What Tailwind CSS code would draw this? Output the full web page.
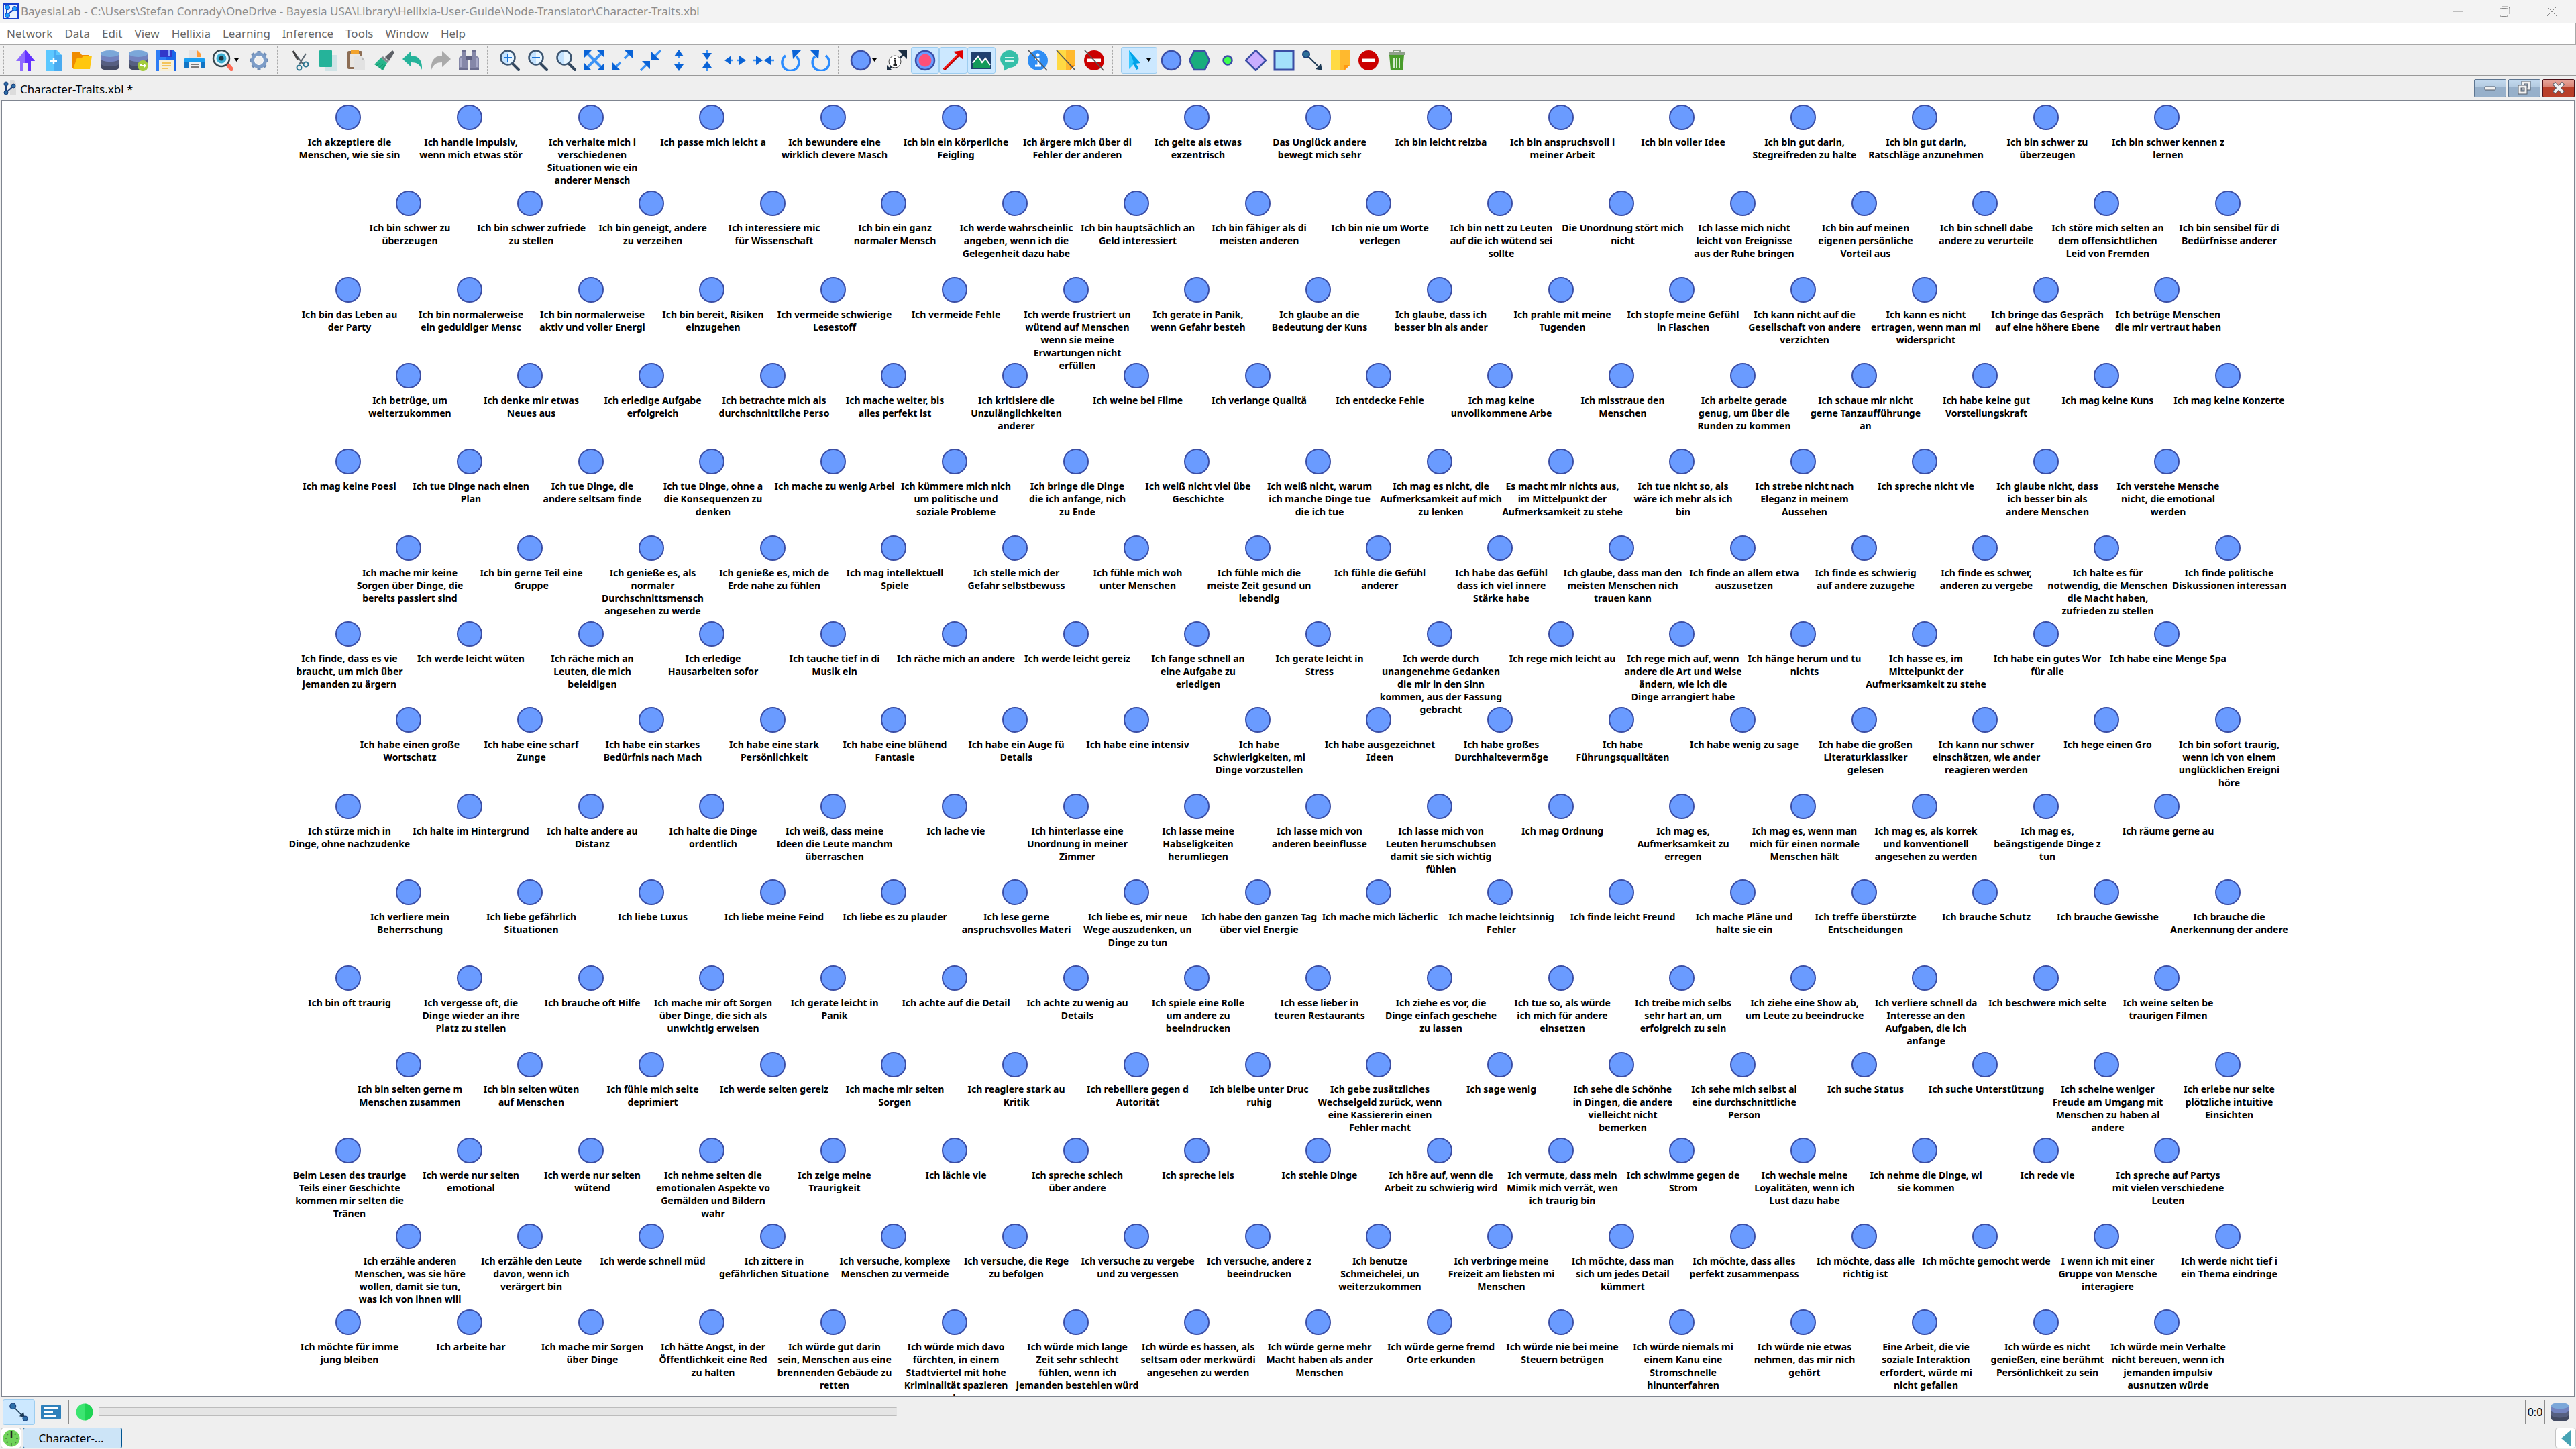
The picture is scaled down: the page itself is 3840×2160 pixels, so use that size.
<!DOCTYPE html>
<html lang="de">
<head>
<meta charset="utf-8">
<title>BayesiaLab</title>
<script src="https://cdn.jsdelivr.net/npm/@tailwindcss/browser@4"></script>
</head>
<body class="flex h-screen flex-col overflow-hidden bg-[#efefef] font-['Noto_Sans','Open_Sans',sans-serif] text-[17px] text-black">

<svg class="hidden" aria-hidden="true">
  <defs>
    <symbol id="db" viewBox="0 0 32 32"><path d="M2 6v20c0 3 6 5 14 5s14-2 14-5V6z" fill="#434a62"/><path d="M2 6v14c0 3 6 5 14 5s14-2 14-5V6z" fill="#565f80"/><path d="M2 6v7c0 3 6 5 14 5s14-2 14-5V6z" fill="#7383bf"/><ellipse cx="16" cy="6" rx="14" ry="5" fill="#7ba7d9"/></symbol>
    <symbol id="glass" viewBox="0 0 32 32"><path d="M19 20l10 10" stroke="#33475e" stroke-width="4" stroke-linecap="round"/><circle cx="13" cy="12" r="10.500" fill="#c4e3ff" stroke="#3d5570" stroke-width="2.500"/><path d="M13 3a9 9 0 0 1 0 18z" fill="#e9f6ff"/></symbol>
    <symbol id="note" viewBox="0 0 32 32"><path d="M2 1h28v22l-8 8H2z" fill="#ffda44"/><path d="M16 1h14v22l-8 8h-6z" fill="#ffb92e"/><path d="M22 31v-8h8z" fill="#ff9811"/></symbol>
    <symbol id="stop" viewBox="0 0 32 32"><circle cx="16" cy="16" r="15" fill="#cb0000"/><rect x="6" y="13.500" width="20" height="5" fill="#fff"/></symbol>
    <symbol id="slash" viewBox="0 0 32 32"><path d="M2 1l28 30" stroke="#555" stroke-width="1.800"/></symbol>
    <symbol id="arc" viewBox="0 0 32 32"><path d="M8 8l16 16" stroke="#1d3a55" stroke-width="2"/><path d="M26 25l-9-2 7-7z" fill="#1d3a55"/><circle cx="6" cy="6" r="5" fill="#2d6ea8" stroke="#1b3f7a" stroke-width="1.500"/></symbol>
    <symbol id="updown" viewBox="0 0 32 32"><path d="M16 5v8M16 19v8" stroke="#3d93f5" stroke-width="2.500"/><path d="M9 10l7-10 7 10z" fill="#0a63d6"/><path d="M9 22l7 10 7-10z" fill="#0a63d6"/></symbol>
    <symbol id="inward" viewBox="0 0 32 32"><path d="M16 0v6M16 26v6" stroke="#3d93f5" stroke-width="2.500"/><path d="M9 5l7 10 7-10z" fill="#0a63d6"/><path d="M9 27l7-10 7 10z" fill="#0a63d6"/></symbol>
    <symbol id="rotate" viewBox="0 0 32 32"><path d="M7 9a12.500 12.500 0 1 0 16 1" fill="none" stroke="#2a8cff" stroke-width="3.500"/><path d="M17 1h13L18 14z" fill="#0a63d6"/></symbol>
  </defs>
</svg>

<header class="flex h-[34px] shrink-0 items-center bg-[#f3f3f3] pl-1 text-[#8d8d8d]">
  <svg class="h-6 w-6 shrink-0" viewBox="0 0 24 24"><rect x="1" y="1" width="22" height="22" fill="#e8f1ff" stroke="#1740d0" stroke-width="2"/><path d="M6 7v11l12-10" fill="none" stroke="#123cc0" stroke-width="2"/><circle cx="7" cy="6" r="3.500" fill="#1d9cff" stroke="#0a35b8"/><circle cx="18" cy="8" r="3.500" fill="#1d9cff" stroke="#0a35b8"/><circle cx="7" cy="18" r="3.500" fill="#1d9cff" stroke="#0a35b8"/></svg>
  <h1 class="ml-[3px] leading-6">BayesiaLab - C:\Users\Stefan Conrady\OneDrive - Bayesia USA\Library\Hellixia-User-Guide\Node-Translator\Character-Traits.xbl</h1>
  <div class="ml-auto flex pr-px">
    <button aria-label="Minimize" class="flex h-[34px] w-[70px] items-center justify-center"><svg class="h-4 w-4" viewBox="0 0 16 16"><path d="M0 8h16" stroke="#888"/></svg></button>
    <button aria-label="Restore" class="flex h-[34px] w-[70px] items-center justify-center"><svg class="h-4 w-4" viewBox="0 0 16 16" fill="none" stroke="#888"><rect x=".5" y="3.500" width="12" height="12" rx="2"/><path d="M4 1h8a3 3 0 0 1 3 3v8"/></svg></button>
    <button aria-label="Close" class="flex h-[34px] w-[70px] items-center justify-center"><svg class="h-4 w-4" viewBox="0 0 16 16"><path d="M1 1l14 14M15 1L1 15" stroke="#888"/></svg></button>
  </div>
</header>

<nav class="flex h-[33px] shrink-0 items-center border-r border-b-2 border-[#a8a8a8] bg-white pl-px text-[#666]">
  <button class="px-[9px] leading-6">Network</button>
  <button class="px-[9px] leading-6">Data</button>
  <button class="px-[9px] leading-6">Edit</button>
  <button class="px-[9px] leading-6">View</button>
  <button class="px-[9px] leading-6">Hellixia</button>
  <button class="px-[9px] leading-6">Learning</button>
  <button class="px-[9px] leading-6">Inference</button>
  <button class="px-[9px] leading-6">Tools</button>
  <button class="px-[9px] leading-6">Window</button>
  <button class="px-[9px] leading-6">Help</button>
</nav>

<div id="toolbar" role="toolbar" aria-label="Tools" class="flex h-[46px] shrink-0 items-center border-b border-[#999]"></div>

<div class="flex h-[36px] shrink-0 items-center pl-1">
  <svg class="h-6 w-6 shrink-0" viewBox="0 0 24 24"><path d="M11 1h6l3 4v18h-9z" fill="#dcdcdc"/><path d="M5 7v12l11-10" fill="none" stroke="#1b3f7a" stroke-width="2"/><circle cx="5" cy="6" r="3" fill="#2d6ea8" stroke="#1b3f7a"/><circle cx="16" cy="9" r="3" fill="#2d6ea8" stroke="#1b3f7a"/><circle cx="5" cy="19" r="3" fill="#2d6ea8" stroke="#1b3f7a"/></svg>
  <h2 class="ml-[2px] mt-1 leading-6">Character-Traits.xbl *</h2>
  <div class="ml-auto flex gap-[3px] pr-[2px]">
    <button aria-label="Minimize document" class="flex h-[27px] w-12 items-center justify-center rounded-[2px] border border-[#5d7590] bg-linear-to-b from-[#c3d9ee] from-0% via-[#b4cbe1] via-40% to-[#97b0ca] to-45%"><svg class="h-5 w-5" viewBox="0 0 20 20"><rect x="2" y="8" width="16" height="5" rx="1" fill="#f2f2f2" stroke="#555c68"/></svg></button>
    <button aria-label="Restore document" class="flex h-[27px] w-12 items-center justify-center rounded-[2px] border border-[#5d7590] bg-linear-to-b from-[#c3d9ee] from-0% via-[#b4cbe1] via-40% to-[#97b0ca] to-45%"><svg class="h-5 w-5" viewBox="0 0 20 20" fill="none"><rect x="8" y="2" width="9" height="9" stroke="#555c68" stroke-width="5"/><rect x="8" y="2" width="9" height="9" stroke="#f2f2f2" stroke-width="3"/><rect x="3" y="8" width="9" height="9" stroke="#555c68" stroke-width="5"/><rect x="3" y="8" width="9" height="9" stroke="#f2f2f2" stroke-width="3"/></svg></button>
    <button aria-label="Close document" class="flex h-[27px] w-12 items-center justify-center rounded-[2px] border border-[#4d1018] bg-linear-to-b from-[#e8a79c] from-0% via-[#d98475] via-40% to-[#b93f29] to-45%"><svg class="h-5 w-5" viewBox="0 0 20 20"><path d="M5 5l10 10M15 5L5 15" stroke="#555c68" stroke-width="6" stroke-linecap="square"/><path d="M5 5l10 10M15 5L5 15" stroke="#f2f2f2" stroke-width="4" stroke-linecap="square"/></svg></button>
  </div>
</div>

<main id="graph" class="relative mr-[2px] ml-[2px] min-h-0 flex-1 overflow-hidden border border-[#7f8590] bg-white"></main>

<div class="flex h-[45px] shrink-0 items-center pr-[9px] pl-1">
  <button aria-label="Modeling mode" class="flex h-[38px] w-12 items-center justify-center rounded-[3px] border border-[#9dcdf0] bg-[#cce8ff]"><svg class="h-7 w-7" viewBox="0 0 32 32"><use href="#arc"/><circle cx="27" cy="27" r="4" fill="#2d6ea8" stroke="#1b3f7a" stroke-width="1.500"/></svg></button>
  <button aria-label="Validation mode" class="ml-2 flex h-[38px] w-8 items-center justify-center"><svg class="h-6 w-8" viewBox="0 0 32 24"><rect x="1" y="1" width="30" height="22" rx="2" fill="#2f80bb"/><path d="M5 6.500h22M5 12h14M5 17.500h18" stroke="#fff" stroke-width="3"/></svg></button>
  <div class="ml-[10px] h-9 w-px bg-[#8c8c8c]"></div>
  <svg class="ml-[10px] h-[26px] w-[26px]" viewBox="0 0 26 26"><circle cx="13" cy="13" r="12.500" fill="#3ce571"/><path d="M13 .5a12.500 12.500 0 0 1 0 25z" fill="#1fd354"/></svg>
  <div role="progressbar" aria-label="Progress" class="ml-2 h-[13px] w-[1190px] border border-[#bcbcbc] border-r-transparent bg-[#e5e5e5]"></div>
  <div class="ml-auto flex h-9 w-[30px] items-center justify-center border-x border-[#8c8c8c] text-[16px] leading-6">0:0</div>
  <svg class="ml-[7px] h-8 w-[30px]"><use href="#db"/></svg>
</div>
<footer class="flex h-[33px] shrink-0 items-start pt-px pl-px">
  <button aria-label="Console" class="flex h-[31px] w-[31px] items-center justify-center rounded-[4px] border border-[#c4c4c4] bg-white"><svg class="h-[26px] w-[26px]" viewBox="0 0 26 26"><circle cx="13" cy="13" r="12.500" fill="#6fd35a"/><path d="M13 2v11" stroke="#222" stroke-width="2.500"/><path d="M13 20v4M3 13h3M20 13h3M6 6l2 2M20 6l-2 2M6 20l2-2M20 20l-2-2" stroke="#4b7f40" stroke-width="1.500"/></svg></button>
  <button class="ml-[2px] h-[31px] w-[148px] rounded-[3px] border border-[#00548f] bg-[#cce4f7] pr-1 leading-7">Character-...</button>
  <button aria-label="Show panel" class="ml-auto flex h-[31px] w-[31px] items-center justify-center rounded-[4px] border border-[#c4c4c4] bg-white"><svg class="h-6 w-4" viewBox="0 0 16 24"><path d="M15 0v24L1 12z" fill="#47a3b4"/></svg></button>
</footer>

<script>
const ball = (r, f = '#6a9bff') => `<circle cx="16" cy="16" r="${r}" fill="${f}" stroke="#3b4ea5" stroke-width="2.500"/>`;
const use = (id, t = '') => `<use href="#${id}" ${t && `transform="${t}"`}/>`;
const diag = 'rotate(45 16 16)';
// [label, drawing, has a drop-down arrow, is pressed]; null is a separator
const tools = [
  null,
  ['Home', '<path d="M16 0L30 17H24V32H8V17H2z" fill="#8f6bff"/><path d="M16 0L30 17H24V32H16z" fill="#6432ff"/><rect x="12" y="20" width="8" height="12" fill="#efefef"/>'],
  ['New', '<path d="M4 0h16l8 8v24H4z" fill="#5cc8ff"/><path d="M20 0v8h8v24H16V0z" fill="#4aabf0"/><path d="M16 12v10M11 17h10" stroke="#fff" stroke-width="2.500"/>'],
  ['Open', '<path d="M2 4h11l3 4h11v20H2z" fill="#f08c00"/><path d="M9 12h7l3-3h12l-3 20H3z" fill="#ffc70f"/>'],
  ['Data', use('db')],
  ['Import', use('db') + '<circle cx="23" cy="24" r="8" fill="#a4cc3c"/><path d="M19 21v4h5v3l4-4-4-4v3h-3v-2z" fill="#fff"/>'],
  ['Save', '<path d="M1 0h25l5 5v27H1z" fill="#2e7df6"/><path d="M16 0h10l5 5v27H16z" fill="#1a66e8"/><rect x="6" y="0" width="18" height="11" fill="#3138c9"/><rect x="18" y="1" width="4" height="8" fill="#8aa8ff"/><rect x="5" y="16" width="22" height="16" fill="#f7efd8"/><path d="M9 20h14M9 24h14M9 28h10" stroke="#f2b632" stroke-width="1.500"/>'],
  ['Print', '<path d="M7 0h13l6 6v8H7z" fill="#e4e4e4"/><path d="M19 0l7 7v4h-7z" fill="#ff9c38"/><rect x="1" y="12" width="30" height="15" rx="2" fill="#1a9ff2"/><path d="M1 19h30v8H1z" fill="#1274c4"/><rect x="7" y="18" width="18" height="13" fill="#f0f0f0"/><path d="M10 22h12M10 26h12" stroke="#555" stroke-width="1.500"/>'],
  ['Preview', '<path d="M23 22l6 7" stroke="#ff6b55" stroke-width="6" stroke-linecap="round"/><circle cx="14" cy="13" r="12" fill="#e8f6fb" stroke="#37474f" stroke-width="2.500"/><circle cx="14" cy="13" r="7.500" fill="#3caed2"/><circle cx="14" cy="13" r="3.500" fill="#1d3440"/>', 1],
  ['Settings', '<path d="M16 2v28M2 16h28M6 6l20 20M26 6L6 26" stroke="#6e8bb3" stroke-width="5"/><circle cx="16" cy="16" r="9.500" fill="#fff" stroke="#7c9cc7" stroke-width="5"/><circle cx="16" cy="16" r="6" fill="#efefef"/>'],
  null,
  ['Cut', '<path d="M6 2l14 19M25 6L15 22" stroke="#58656f" stroke-width="2"/><path d="M6 2l7 13" stroke="#444" stroke-width="3"/><circle cx="25" cy="22" r="3.500" fill="none" stroke="#2b7590" stroke-width="2"/><circle cx="15" cy="27" r="3.500" fill="none" stroke="#2b7590" stroke-width="2"/>'],
  ['Copy', '<rect x="12" y="8" width="18" height="24" fill="#cfe3e6"/><rect x="3" y="1" width="19" height="25" rx="1" fill="#25b39a"/>'],
  ['Paste', '<rect x="3" y="2" width="22" height="27" rx="2" fill="#8d6e55"/><rect x="6" y="6" width="16" height="20" fill="#e9e6e2"/><rect x="8" y="0" width="12" height="6" fill="#f2a32c"/><path d="M12 10h12l5 6v15H12z" fill="#e2e2e2"/><path d="M24 10l5 6h-5z" fill="#bbb"/>'],
  ['Format', '<path d="M28 1l3 3-8 13-6-6z" fill="#5d6066"/><path d="M14 10l9 8-3 2-9-8z" fill="#85888e"/><path d="M11 12l9 8-6 11L1 22z" fill="#27b58c"/><path d="M4 24l6-4M8 27l6-5M12 30l5-7" stroke="#16996f" stroke-width="1.500"/>'],
  ['Undo', '<path d="M1 14L14 2v7c10 0 17 6 16 21-3-8-8-11-16-11v7z" fill="#25b39a"/>'],
  ['Redo', '<path d="M31 14L18 2v7C8 9 1 15 2 30c3-8 8-11 16-11v7z" fill="#aaa"/>'],
  ['Find', '<path d="M5 2h7v8l2 2v17H1V12l4-3zM20 2h7v7l4 3v17H18V12l2-2z" fill="#8587a8"/><rect x="12" y="9" width="8" height="7" fill="#5d5f80"/><path d="M5 0h7v4H5zM20 0h7v4h-7zM1 27h13v4H1zM18 27h13v4H18z" fill="#6b6d8e"/><path d="M4 13v13M28 13v13" stroke="#a8aac8" stroke-width="2"/>'],
  null,
  ['Zoom in', use('glass') + '<path d="M13 6v12M7 12h12" stroke="#1a73d8" stroke-width="2"/>'],
  ['Zoom out', use('glass') + '<path d="M7 12h12" stroke="#1a73d8" stroke-width="2"/>'],
  ['Default zoom', use('glass')],
  ['Fit', '<path d="M4 4l24 24M28 4L4 28" stroke="#3d93f5" stroke-width="4"/><path d="M1 1h11L1 12zM31 1v11L20 1zM1 31V20l11 11zM31 31H20l11-11z" fill="#0a63d6"/>'],
  ['Stretch', '<path d="M4 28l9-9M19 13l9-9" stroke="#3d93f5" stroke-width="3.500"/><path d="M31 1v12L19 1zM1 31V19l12 12z" fill="#0a63d6"/>'],
  ['Shrink', '<path d="M1 31l9-9M22 10l9-9" stroke="#3d93f5" stroke-width="3.500"/><path d="M17 3v12h12zM15 29V17H3z" fill="#0a63d6"/>'],
  ['Stretch vertically', use('updown')],
  ['Shrink vertically', use('inward')],
  ['Stretch horizontally', use('updown', 'rotate(90 16 16)')],
  ['Shrink horizontally', use('inward', 'rotate(90 16 16)')],
  ['Rotate left', use('rotate')],
  ['Rotate right', use('rotate', 'translate(32 0) scale(-1 1)')],
  null,
  ['Node style', ball(14), 1],
  ['Arc comments', '<path d="M3 30l24-24" stroke="#1b2d42" stroke-width="2.500"/><path d="M31 1v13L18 1z" fill="#1b2d42"/><path d="M1 31v-8l8 8z" fill="#1b2d42"/><circle cx="13" cy="18" r="9" fill="#fff" stroke="#444"/><path d="M13 12v2.500M11 16.500h2.500V23M10.500 23h5.500" stroke="#222" stroke-width="2" fill="none"/>'],
  ['Node colors', ball(14) + '<circle cx="16" cy="16" r="9.500" fill="#ff4f78"/>', 0, 1],
  ['Arc colors', '<path d="M2 30L24 8" stroke="#b00000" stroke-width="4"/><path d="M2 29L24 7" stroke="#ff1a1a" stroke-width="2"/><path d="M31 1v14L16 3z" fill="#e00000"/>', 0, 1],
  ['Images', '<rect x="1" y="4" width="30" height="25" fill="#20406e"/><path d="M3 27V19l8-9 6 9 4-5 8 9v4z" fill="#129a5a"/><path d="M3 20l8-10 6 9 5-6 7 10" stroke="#fff" stroke-width="2" fill="none"/>', 0, 1],
  ['Comments', '<path d="M16 1a13.500 13 0 0 1 0 26l-9 5v-8A13.500 13 0 0 1 16 1z" fill="#35bfa8"/><path d="M9 12h14M9 17h14" stroke="#d8f5ef" stroke-width="2"/>'],
  ['Hide information', '<circle cx="16" cy="16" r="15" fill="#2f8ef4"/><circle cx="16" cy="8" r="2.500" fill="#fff"/><path d="M12 14h5v10M12 24h9" stroke="#fff" stroke-width="3" fill="none"/>' + use('slash')],
  ['Hide notes', use('note') + use('slash')],
  ['Hide forbidden arcs', use('stop') + use('slash')],
  null,
  ['Select', '<path d="M7 1l17 19-9 1-8 8z" fill="#35c9ff"/><path d="M7 1l17 19-9 1z" fill="#00a2e8"/><path d="M14 19l6 10" stroke="#00a2e8" stroke-width="4"/>', 1, 1],
  ['Add node', ball(14)],
  ['Add constraint', '<path d="M8 2h16l7 14-7 14H8L1 16z" fill="#18ad7c" stroke="#3b4ea5" stroke-width="2.500"/>'],
  ['Add function node', ball(6.5, '#40ff50')],
  ['Add utility node', '<path d="M16 1l15 15-15 15L1 16z" fill="#c9adff" stroke="#3b4ea5" stroke-width="2.500"/>'],
  ['Add decision node', '<rect x="2" y="2" width="28" height="28" fill="#a3e0fb" stroke="#3b4ea5" stroke-width="3"/>'],
  ['Add arc', '<path d="M8 8l20 20" stroke="#1d3a55" stroke-width="2"/><path d="M31 31l-10-2 8-8z" fill="#1d3a55"/><circle cx="7" cy="7" r="5" fill="#2d6e98" stroke="#1b3f7a" stroke-width="2"/>'],
  ['Add note', use('note')],
  ['Forbid arc', use('stop')],
  ['Delete', '<path d="M5 8h22l-2 23H7z" fill="#4a9c2c"/><path d="M12 12v15M16 12v15M20 12v15" stroke="#d6ecd0" stroke-width="2"/><path d="M4 4h24v4H4z" fill="#8fa08b"/><path d="M11 4V1h10v3" fill="none" stroke="#8fa08b" stroke-width="2"/>'],
];
let first = true;
document.getElementById('toolbar').innerHTML = tools.map(t => {
  if (!t) {
    const cls = first ? 'pl-[5px] w-[17px]' : 'pl-[6px] w-[19px]';
    first = false;
    return `<div class="h-[42px] shrink-0 ${cls}"><div class="h-full w-px border-l border-dashed border-[#aaa]"></div></div>`;
  }
  const [label, art, drop, on] = t;
  return `<button aria-label="${label}" class="flex h-10 shrink-0 items-center rounded-[3px] border pl-[4px] ${drop ? 'w-[54px]' : 'w-[42px]'} ${on ? 'border-[#9dcdf0] bg-[#cce8ff]' : 'border-transparent'}"><svg class="h-8 w-8 shrink-0" viewBox="0 0 32 32">${art}</svg>${drop ? '<svg class="ml-px h-[5px] w-[7px]" viewBox="0 0 7 5"><path d="M0 0h7L3.500 5z" fill="#000"/></svg>' : ''}</button>`;
}).join('');

// One string per row; nodes split by ";", label lines by "|".
const rows = [
'Ich akzeptiere die|Menschen, wie sie sin;Ich handle impulsiv,|wenn mich etwas stör;Ich verhalte mich i|verschiedenen|Situationen wie ein|anderer Mensch;Ich passe mich leicht a;Ich bewundere eine|wirklich clevere Masch;Ich bin ein körperliche|Feigling;Ich ärgere mich über di|Fehler der anderen;Ich gelte als etwas|exzentrisch;Das Unglück andere|bewegt mich sehr;Ich bin leicht reizba;Ich bin anspruchsvoll i|meiner Arbeit;Ich bin voller Idee;Ich bin gut darin,|Stegreifreden zu halte;Ich bin gut darin,|Ratschläge anzunehmen;Ich bin schwer zu|überzeugen;Ich bin schwer kennen z|lernen',
'Ich bin schwer zu|überzeugen;Ich bin schwer zufriede|zu stellen;Ich bin geneigt, andere|zu verzeihen;Ich interessiere mic|für Wissenschaft;Ich bin ein ganz|normaler Mensch;Ich werde wahrscheinlic|angeben, wenn ich die|Gelegenheit dazu habe;Ich bin hauptsächlich an|Geld interessiert;Ich bin fähiger als di|meisten anderen;Ich bin nie um Worte|verlegen;Ich bin nett zu Leuten|auf die ich wütend sei|sollte;Die Unordnung stört mich|nicht;Ich lasse mich nicht|leicht von Ereignisse|aus der Ruhe bringen;Ich bin auf meinen|eigenen persönliche|Vorteil aus;Ich bin schnell dabe|andere zu verurteile;Ich störe mich selten an|dem offensichtlichen|Leid von Fremden;Ich bin sensibel für di|Bedürfnisse anderer',
'Ich bin das Leben au|der Party;Ich bin normalerweise|ein geduldiger Mensc;Ich bin normalerweise|aktiv und voller Energi;Ich bin bereit, Risiken|einzugehen;Ich vermeide schwierige|Lesestoff;Ich vermeide Fehle;Ich werde frustriert un|wütend auf Menschen|wenn sie meine|Erwartungen nicht|erfüllen;Ich gerate in Panik,|wenn Gefahr besteh;Ich glaube an die|Bedeutung der Kuns;Ich glaube, dass ich|besser bin als ander;Ich prahle mit meine|Tugenden;Ich stopfe meine Gefühl|in Flaschen;Ich kann nicht auf die|Gesellschaft von andere|verzichten;Ich kann es nicht|ertragen, wenn man mi|widerspricht;Ich bringe das Gespräch|auf eine höhere Ebene;Ich betrüge Menschen|die mir vertraut haben',
'Ich betrüge, um|weiterzukommen;Ich denke mir etwas|Neues aus;Ich erledige Aufgabe|erfolgreich;Ich betrachte mich als|durchschnittliche Perso;Ich mache weiter, bis|alles perfekt ist;Ich kritisiere die|Unzulänglichkeiten|anderer;Ich weine bei Filme;Ich verlange Qualitä;Ich entdecke Fehle;Ich mag keine|unvollkommene Arbe;Ich misstraue den|Menschen;Ich arbeite gerade|genug, um über die|Runden zu kommen;Ich schaue mir nicht|gerne Tanzaufführunge|an;Ich habe keine gut|Vorstellungskraft;Ich mag keine Kuns;Ich mag keine Konzerte',
'Ich mag keine Poesi;Ich tue Dinge nach einen|Plan;Ich tue Dinge, die|andere seltsam finde;Ich tue Dinge, ohne a|die Konsequenzen zu|denken;Ich mache zu wenig Arbei;Ich kümmere mich nich|um politische und|soziale Probleme;Ich bringe die Dinge|die ich anfange, nich|zu Ende;Ich weiß nicht viel übe|Geschichte;Ich weiß nicht, warum|ich manche Dinge tue|die ich tue;Ich mag es nicht, die|Aufmerksamkeit auf mich|zu lenken;Es macht mir nichts aus,|im Mittelpunkt der|Aufmerksamkeit zu stehe;Ich tue nicht so, als|wäre ich mehr als ich|bin;Ich strebe nicht nach|Eleganz in meinem|Aussehen;Ich spreche nicht vie;Ich glaube nicht, dass|ich besser bin als|andere Menschen;Ich verstehe Mensche|nicht, die emotional|werden',
'Ich mache mir keine|Sorgen über Dinge, die|bereits passiert sind;Ich bin gerne Teil eine|Gruppe;Ich genieße es, als|normaler|Durchschnittsmensch|angesehen zu werde;Ich genieße es, mich de|Erde nahe zu fühlen;Ich mag intellektuell|Spiele;Ich stelle mich der|Gefahr selbstbewuss;Ich fühle mich woh|unter Menschen;Ich fühle mich die|meiste Zeit gesund un|lebendig;Ich fühle die Gefühl|anderer;Ich habe das Gefühl|dass ich viel innere|Stärke habe;Ich glaube, dass man den|meisten Menschen nich|trauen kann;Ich finde an allem etwa|auszusetzen;Ich finde es schwierig|auf andere zuzugehe;Ich finde es schwer,|anderen zu vergebe;Ich halte es für|notwendig, die Menschen|die Macht haben,|zufrieden zu stellen;Ich finde politische|Diskussionen interessan',
'Ich finde, dass es vie|braucht, um mich über|jemanden zu ärgern;Ich werde leicht wüten;Ich räche mich an|Leuten, die mich|beleidigen;Ich erledige|Hausarbeiten sofor;Ich tauche tief in di|Musik ein;Ich räche mich an andere;Ich werde leicht gereiz;Ich fange schnell an|eine Aufgabe zu|erledigen;Ich gerate leicht in|Stress;Ich werde durch|unangenehme Gedanken|die mir in den Sinn|kommen, aus der Fassung|gebracht;Ich rege mich leicht au;Ich rege mich auf, wenn|andere die Art und Weise|ändern, wie ich die|Dinge arrangiert habe;Ich hänge herum und tu|nichts;Ich hasse es, im|Mittelpunkt der|Aufmerksamkeit zu stehe;Ich habe ein gutes Wor|für alle;Ich habe eine Menge Spa',
'Ich habe einen große|Wortschatz;Ich habe eine scharf|Zunge;Ich habe ein starkes|Bedürfnis nach Mach;Ich habe eine stark|Persönlichkeit;Ich habe eine blühend|Fantasie;Ich habe ein Auge fü|Details;Ich habe eine intensiv;Ich habe|Schwierigkeiten, mi|Dinge vorzustellen;Ich habe ausgezeichnet|Ideen;Ich habe großes|Durchhaltevermöge;Ich habe|Führungsqualitäten;Ich habe wenig zu sage;Ich habe die großen|Literaturklassiker|gelesen;Ich kann nur schwer|einschätzen, wie ander|reagieren werden;Ich hege einen Gro;Ich bin sofort traurig,|wenn ich von einem|unglücklichen Ereigni|höre',
'Ich stürze mich in|Dinge, ohne nachzudenke;Ich halte im Hintergrund;Ich halte andere au|Distanz;Ich halte die Dinge|ordentlich;Ich weiß, dass meine|Ideen die Leute manchm|überraschen;Ich lache vie;Ich hinterlasse eine|Unordnung in meiner|Zimmer;Ich lasse meine|Habseligkeiten|herumliegen;Ich lasse mich von|anderen beeinflusse;Ich lasse mich von|Leuten herumschubsen|damit sie sich wichtig|fühlen;Ich mag Ordnung;Ich mag es,|Aufmerksamkeit zu|erregen;Ich mag es, wenn man|mich für einen normale|Menschen hält;Ich mag es, als korrek|und konventionell|angesehen zu werden;Ich mag es,|beängstigende Dinge z|tun;Ich räume gerne au',
'Ich verliere mein|Beherrschung;Ich liebe gefährlich|Situationen;Ich liebe Luxus;Ich liebe meine Feind;Ich liebe es zu plauder;Ich lese gerne|anspruchsvolles Materi;Ich liebe es, mir neue|Wege auszudenken, un|Dinge zu tun;Ich habe den ganzen Tag|über viel Energie;Ich mache mich lächerlic;Ich mache leichtsinnig|Fehler;Ich finde leicht Freund;Ich mache Pläne und|halte sie ein;Ich treffe überstürzte|Entscheidungen;Ich brauche Schutz;Ich brauche Gewisshe;Ich brauche die|Anerkennung der andere',
'Ich bin oft traurig;Ich vergesse oft, die|Dinge wieder an ihre|Platz zu stellen;Ich brauche oft Hilfe;Ich mache mir oft Sorgen|über Dinge, die sich als|unwichtig erweisen;Ich gerate leicht in|Panik;Ich achte auf die Detail;Ich achte zu wenig au|Details;Ich spiele eine Rolle|um andere zu|beeindrucken;Ich esse lieber in|teuren Restaurants;Ich ziehe es vor, die|Dinge einfach geschehe|zu lassen;Ich tue so, als würde|ich mich für andere|einsetzen;Ich treibe mich selbs|sehr hart an, um|erfolgreich zu sein;Ich ziehe eine Show ab,|um Leute zu beeindrucke;Ich verliere schnell da|Interesse an den|Aufgaben, die ich|anfange;Ich beschwere mich selte;Ich weine selten be|traurigen Filmen',
'Ich bin selten gerne m|Menschen zusammen;Ich bin selten wüten|auf Menschen;Ich fühle mich selte|deprimiert;Ich werde selten gereiz;Ich mache mir selten|Sorgen;Ich reagiere stark au|Kritik;Ich rebelliere gegen d|Autorität;Ich bleibe unter Druc|ruhig;Ich gebe zusätzliches|Wechselgeld zurück, wenn|eine Kassiererin einen|Fehler macht;Ich sage wenig;Ich sehe die Schönhe|in Dingen, die andere|vielleicht nicht|bemerken;Ich sehe mich selbst al|eine durchschnittliche|Person;Ich suche Status;Ich suche Unterstützung;Ich scheine weniger|Freude am Umgang mit|Menschen zu haben al|andere;Ich erlebe nur selte|plötzliche intuitive|Einsichten',
'Beim Lesen des traurige|Teils einer Geschichte|kommen mir selten die|Tränen;Ich werde nur selten|emotional;Ich werde nur selten|wütend;Ich nehme selten die|emotionalen Aspekte vo|Gemälden und Bildern|wahr;Ich zeige meine|Traurigkeit;Ich lächle vie;Ich spreche schlech|über andere;Ich spreche leis;Ich stehle Dinge;Ich höre auf, wenn die|Arbeit zu schwierig wird;Ich vermute, dass mein|Mimik mich verrät, wen|ich traurig bin;Ich schwimme gegen de|Strom;Ich wechsle meine|Loyalitäten, wenn ich|Lust dazu habe;Ich nehme die Dinge, wi|sie kommen;Ich rede vie;Ich spreche auf Partys|mit vielen verschiedene|Leuten',
'Ich erzähle anderen|Menschen, was sie höre|wollen, damit sie tun,|was ich von ihnen will;Ich erzähle den Leute|davon, wenn ich|verärgert bin;Ich werde schnell müd;Ich zittere in|gefährlichen Situatione;Ich versuche, komplexe|Menschen zu vermeide;Ich versuche, die Rege|zu befolgen;Ich versuche zu vergebe|und zu vergessen;Ich versuche, andere z|beeindrucken;Ich benutze|Schmeichelei, un|weiterzukommen;Ich verbringe meine|Freizeit am liebsten mi|Menschen;Ich möchte, dass man|sich um jedes Detail|kümmert;Ich möchte, dass alles|perfekt zusammenpass;Ich möchte, dass alle|richtig ist;Ich möchte gemocht werde;I wenn ich mit einer|Gruppe von Mensche|interagiere;Ich werde nicht tief i|ein Thema eindringe',
'Ich möchte für imme|jung bleiben;Ich arbeite har;Ich mache mir Sorgen|über Dinge;Ich hätte Angst, in der|Öffentlichkeit eine Red|zu halten;Ich würde gut darin|sein, Menschen aus eine|brennenden Gebäude zu|retten;Ich würde mich davo|fürchten, in einem|Stadtviertel mit hohe|Kriminalität spazieren|gehen;Ich würde mich lange|Zeit sehr schlecht|fühlen, wenn ich|jemanden bestehlen würd;Ich würde es hassen, als|seltsam oder merkwürdi|angesehen zu werden;Ich würde gerne mehr|Macht haben als ander|Menschen;Ich würde gerne fremd|Orte erkunden;Ich würde nie bei meine|Steuern betrügen;Ich würde niemals mi|einem Kanu eine|Stromschnelle|hinunterfahren;Ich würde nie etwas|nehmen, das mir nich|gehört;Eine Arbeit, die vie|soziale Interaktion|erfordert, würde mi|nicht gefallen;Ich würde es nicht|genießen, eine berühmt|Persönlichkeit zu sein;Ich würde mein Verhalte|nicht bereuen, wenn ich|jemanden impulsiv|ausnutzen würde',
];
const stepX = 180.76, stepY = 128.32;
document.getElementById('graph').innerHTML = rows.map((row, r) => row.split(';').map((label, i) => {
  const x = Math.round(516 + (r % 2) * stepX / 2 + i * stepX) - 100;
  const y = Math.round(25 + r * stepY) - 19;
  return `<div class="absolute flex w-[200px] flex-col items-center" style="left:${x}px;top:${y}px"><div class="h-[38px] w-[38px] rounded-full border-2 border-[#3b4ea5] bg-[#6a9bff]"></div><p class="mt-2 pl-[4px] text-center text-[14px] leading-[19px] font-bold whitespace-nowrap">${label.split('|').join('<br>')}</p></div>`;
}).join('')).join('');
</script>
</body>
</html>
